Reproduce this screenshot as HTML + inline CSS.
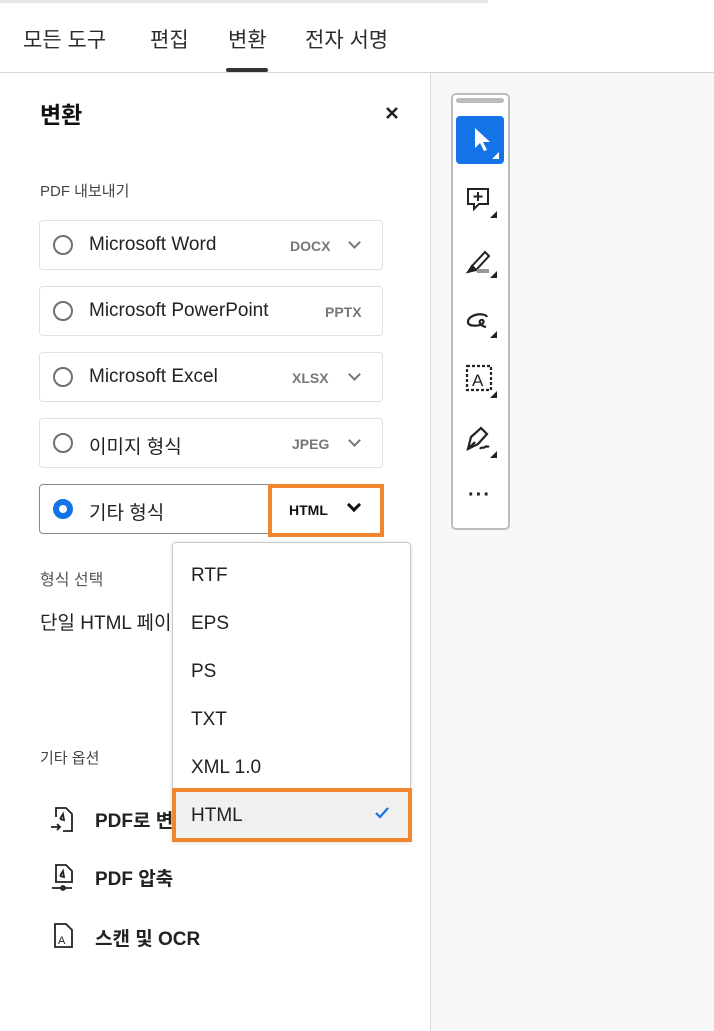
<!DOCTYPE html>
<html><head><meta charset="utf-8"><style>
*{box-sizing:border-box;margin:0;padding:0}
body{width:714px;height:1031px;position:relative;background:#fff;font-family:"Liberation Sans","Noto Sans CJK KR",sans-serif;color:#222;overflow:hidden}
.a{position:absolute}
.tab{position:absolute;top:24px;font-size:21px;color:#2c2c2c}
.card{position:absolute;left:39px;width:344px;height:50px;border:1px solid #e1e1e1;border-radius:4px}
.card .r{position:absolute;left:13px;top:14px;width:20px;height:20px;border:2px solid #707070;border-radius:50%}
.card .t{position:absolute;left:49px;top:13px;font-size:19px;color:#222}
.card .f{position:absolute;top:17px;font-size:14px;font-weight:bold;color:#777}
.chev{position:absolute;width:9px;height:9px;border-right:2px solid #777;border-bottom:2px solid #777;transform:rotate(45deg)}
.mi{position:absolute;left:191px;font-size:19px;color:#222}
.opt{position:absolute;left:95px;font-size:19px;font-weight:bold;color:#222}
.tri{position:absolute;width:0;height:0;border-left:7px solid transparent;border-bottom:7px solid #222}
</style></head><body>
<div class="a" style="left:0;top:0;width:488px;height:3px;background:#e6e6e6"></div>
<div class="tab" style="left:23px">모든 도구</div>
<div class="tab" style="left:150px">편집</div>
<div class="tab" style="left:228px">변환</div>
<div class="tab" style="left:305px">전자 서명</div>
<div class="a" style="left:226px;top:68px;width:42px;height:4px;background:#333;border-radius:2px"></div>
<div class="a" style="left:0;top:72px;width:714px;height:1px;background:#d5d5d5"></div>
<div class="a" style="left:430px;top:73px;width:1px;height:958px;background:#ddd"></div>
<div class="a" style="left:431px;top:73px;width:283px;height:958px;background:#f8f8f8"></div>

<div class="a" style="left:40px;top:96px;font-size:23px;font-weight:bold;color:#111">변환</div>
<svg class="a" style="left:385px;top:106px" width="14" height="14"><path d="M2 2l10 10M12 2L2 12" stroke="#222" stroke-width="2.6"/></svg>
<div class="a" style="left:40px;top:180px;font-size:15px;color:#444">PDF 내보내기</div>

<div class="card" style="top:220px"><div class="r"></div><div class="t">Microsoft Word</div><div class="f" style="left:250px">DOCX</div><div class="chev" style="left:310px;top:17px"></div></div>
<div class="card" style="top:286px"><div class="r"></div><div class="t">Microsoft PowerPoint</div><div class="f" style="left:285px">PPTX</div></div>
<div class="card" style="top:352px"><div class="r"></div><div class="t">Microsoft Excel</div><div class="f" style="left:252px">XLSX</div><div class="chev" style="left:310px;top:17px"></div></div>
<div class="card" style="top:418px"><div class="r"></div><div class="t">이미지 형식</div><div class="f" style="left:252px">JPEG</div><div class="chev" style="left:310px;top:17px"></div></div>
<div class="card" style="top:484px;border-color:#8a8a8a"><div class="r" style="border:6px solid #1473e6"></div><div class="t">기타 형식</div></div>
<div class="a" style="left:268px;top:484px;width:116px;height:53px;border:4px solid #f1862e"></div>
<div class="a" style="left:289px;top:502px;font-size:14px;font-weight:bold;color:#111">HTML</div>
<div class="chev" style="left:349px;top:500px;border-color:#111;border-width:3px;width:10px;height:10px"></div>

<div class="a" style="left:40px;top:566px;font-size:16px;color:#555">형식 선택</div>
<div class="a" style="left:40px;top:608px;font-size:19px;color:#222">단일 HTML 페이</div>
<div class="a" style="left:40px;top:747px;font-size:15px;color:#444">기타 옵션</div>

<svg class="a" style="left:48px;top:805px" width="30" height="30" viewBox="0 0 30 30" fill="none" stroke="#222" stroke-width="1.8"><path d="M8 12V3h10l6 6v17h-9"/><path d="M3 22h9m-3-3 3 3-3 3"/><path d="M12 14l3-5 1 6-4-1"/></svg>
<div class="opt" style="top:806px">PDF로 변</div>
<svg class="a" style="left:48px;top:862px" width="30" height="30" viewBox="0 0 30 30" fill="none" stroke="#222" stroke-width="1.8"><path d="M8 20V3h10l6 6v11z"/><path d="M4 26h20"/><circle cx="15" cy="26" r="2"/><path d="M12 14l3-5 1 6-4-1"/></svg>
<div class="opt" style="top:864px">PDF 압축</div>
<svg class="a" style="left:48px;top:921px" width="30" height="30" viewBox="0 0 30 30" fill="none" stroke="#222" stroke-width="1.8"><path d="M7 26V3h11l6 6v17z"/><text x="10" y="23" font-size="11" fill="#222" stroke="none" font-family="Liberation Sans">A</text></svg>
<div class="opt" style="top:924px">스캔 및 OCR</div>

<div class="a" style="left:172px;top:542px;width:239px;height:300px;background:#fff;border:1px solid #c8c8c8;border-radius:4px;box-shadow:0 1px 4px rgba(0,0,0,.15)"></div>
<div class="mi" style="top:565px">RTF</div>
<div class="mi" style="top:613px">EPS</div>
<div class="mi" style="top:661px">PS</div>
<div class="mi" style="top:709px">TXT</div>
<div class="mi" style="top:757px">XML 1.0</div>
<div class="a" style="left:172px;top:788px;width:240px;height:54px;background:#f0f0f0;border:4px solid #f1862e"></div>
<div class="mi" style="top:805px">HTML</div>
<svg class="a" style="left:374px;top:806px" width="16" height="14"><path d="M2 7l4 4 8-9" fill="none" stroke="#1473e6" stroke-width="2.2"/></svg>

<div class="a" style="left:451px;top:93px;width:59px;height:437px;background:#fff;border:2px solid #bdbdbd;border-radius:5px"></div>
<div class="a" style="left:456px;top:98px;width:48px;height:5px;background:#bbb;border-radius:3px"></div>
<div class="a" style="left:456px;top:116px;width:48px;height:48px;background:#1473e6;border-radius:4px"></div>
<svg class="a" style="left:456px;top:116px" width="48" height="48"><path d="M19 12v20l5-5 4 8 3-1-4-8 7 0z" fill="#fff"/><path d="M43 36v7h-7z" fill="#fff"/></svg>
<svg class="a" style="left:465px;top:186px" width="36" height="36" fill="none" stroke="#222" stroke-width="2"><path d="M3 3h20v15h-9l-5 5v-5H3z"/><path d="M13 6v9M8.5 10.5h9"/></svg>
<svg class="a" style="left:465px;top:246px" width="36" height="36" fill="none" stroke="#222" stroke-width="2"><path d="M7 20l13-14 4 4-13 14z"/><path d="M3 26l4-6 4 4z" fill="#222"/><path d="M12 25h12" stroke="#999" stroke-width="4"/></svg>
<svg class="a" style="left:465px;top:306px" width="36" height="36" fill="none" stroke="#222" stroke-width="2.2"><path d="M22 11c-2-5-19-3-19 5 0 5 11 4 14 2 3-2 1-5-1-4-3 1-1 6 5 7"/></svg>
<svg class="a" style="left:465px;top:364px" width="36" height="36" fill="none" stroke="#222" stroke-width="2.2"><path d="M2 2h24v24H2z" stroke-dasharray="3 2"/><text x="7" y="22" font-size="17" fill="#222" stroke="none" font-family="Liberation Sans">A</text></svg>
<svg class="a" style="left:465px;top:424px" width="36" height="36" fill="none" stroke="#222" stroke-width="2.2"><path d="M3 25l3-12 10-9 6 6-9 10z"/><path d="M3 25l7-7"/><path d="M15 25c2-3 3 0 5-2s2 1 4-1"/></svg>
<div class="tri" style="left:490px;top:211px"></div>
<div class="tri" style="left:490px;top:271px"></div>
<div class="tri" style="left:490px;top:331px"></div>
<div class="tri" style="left:490px;top:391px"></div>
<div class="tri" style="left:490px;top:451px"></div>
<div class="a" style="left:468px;top:484px;font-size:20px;font-weight:bold;color:#222;letter-spacing:1px">···</div>
</body></html>
